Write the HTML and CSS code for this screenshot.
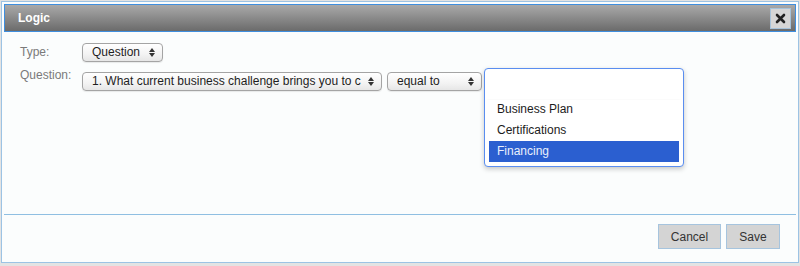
FILE: index.html
```html
<!DOCTYPE html>
<html lang="en">
<head>
    <meta charset="UTF-8">
    <title>Logic</title>
    <link rel="stylesheet" href="styles.css">
</head>
<body>
<div class="dialog">
    <div class="titlebar">
        <span class="title">Logic</span>
        <button class="close" type="button">
            <svg width="11" height="11" viewBox="0 0 11 11"><path d="M2 2 L9 9 M9 2 L2 9" stroke="#222" stroke-width="2.6" stroke-linecap="round"/></svg>
        </button>
    </div>

    <div class="content">
        <div class="row">
            <label class="lbl">Type:</label>
            <div class="select sel-type"><span class="text">Question</span><span class="arrows"></span></div>
        </div>
        <div class="row row2">
            <label class="lbl">Question:</label>
            <div class="select sel-question"><span class="text">1. What current business challenge brings you to c</span><span class="arrows"></span></div>
            <div class="select sel-op"><span class="text">equal to</span><span class="arrows"></span></div>
            <div class="value-wrap">
                <ul class="listbox">
                    <li class="blank"></li>
                    <li>Business Plan</li>
                    <li>Certifications</li>
                    <li class="selected">Financing</li>
                </ul>
            </div>
        </div>
    </div>

    <div class="footer">
        <button class="btn btn-cancel" type="button">Cancel</button>
        <button class="btn btn-save" type="button">Save</button>
    </div>
</div>
</body>
</html>
```

FILE: styles.css
```css
body {
    margin: 0;
    background-color: #e3e3e3;
    font-family: "Liberation Sans", Arial, sans-serif;
    font-size: 12px;
    height: 266px;
    overflow: hidden;
}

.dialog {
    margin: 1px 0 0 1px;
    width: 798px;
    height: 262px;
    box-sizing: border-box;
    border: 1px solid #9cc3e4;
    padding: 2px;
    background-color: #fbfdfd;
    display: flex;
    flex-direction: column;
}

.titlebar {
    height: 28px;
    box-sizing: border-box;
    border: 1px solid #3f8ede;
    background: linear-gradient(to bottom, #a9a9a9 0%, #8a8a8a 50%, #6b6b6b 100%);
    display: flex;
    align-items: center;
    justify-content: space-between;
    padding: 0 4px 0 13px;
}

.title {
    color: #fff;
    font-weight: bold;
    font-size: 12px;
}

.close {
    width: 21px;
    height: 21px;
    box-sizing: border-box;
    border: 1px solid #a6c2da;
    background-color: #d6d6d6;
    padding: 0;
    display: flex;
    align-items: center;
    justify-content: center;
}

.content {
    flex: 1;
    padding: 11px 16px 0;
}

.row {
    display: flex;
    align-items: flex-start;
    gap: 5px;
}

.row2 {
    margin-top: 5px;
}

.lbl {
    width: 57px;
    color: #7a7a7a;
    line-height: 16px;
}

.row:first-child .lbl {
    line-height: 19px;
}

.select {
    height: 19px;
    box-sizing: border-box;
    border: 1px solid #a4a4a4;
    border-radius: 4px;
    background: linear-gradient(to bottom, #ffffff 0%, #f3f3f3 60%, #e6e6e6 100%);
    box-shadow: 0 1px 1px rgba(0, 0, 0, 0.08);
    color: #1e1e1e;
    line-height: 17px;
    padding: 0 16px 0 9px;
    position: relative;
}

.select .text {
    display: block;
    white-space: nowrap;
    overflow: hidden;
}

.arrows {
    position: absolute;
    right: 7px;
    top: 4px;
    width: 6px;
    height: 9px;
}

.arrows::before,
.arrows::after {
    content: "";
    position: absolute;
    left: 0;
    border-left: 3px solid transparent;
    border-right: 3px solid transparent;
}

.arrows::before {
    top: 0;
    border-bottom: 4px solid #333;
}

.arrows::after {
    bottom: 0;
    border-top: 4px solid #333;
}

.sel-type {
    width: 81px;
}

.sel-question {
    width: 300px;
    margin-top: 5px;
}

.sel-op {
    width: 95px;
    margin-top: 5px;
}

.value-wrap {
    position: relative;
    width: 120px;
    height: 19px;
    margin-top: 5px;
}

.listbox {
    position: absolute;
    left: -3px;
    top: -4px;
    width: 200px;
    box-sizing: border-box;
    margin: 0;
    padding: 4px;
    list-style: none;
    background-color: #fff;
    border: 1px solid #5a8ef0;
    border-radius: 4px;
    box-shadow: 0 2px 5px rgba(0, 0, 0, 0.22);
    z-index: 2;
}

.listbox li {
    height: 21px;
    line-height: 21px;
    padding-left: 8px;
    color: #1c1c1c;
}

.listbox .blank {
    height: 26px;
    box-shadow: 0 2px 2px -2px rgba(0, 0, 0, 0.05);
    margin: 0 -4px;
}

.listbox .selected {
    background-color: #2b5fd0;
    color: #e9effc;
}

.footer {
    border-top: 1px solid #8fbfe2;
    padding: 9px 16px 11px 0;
    display: flex;
    justify-content: flex-end;
    gap: 5px;
}

.btn {
    height: 25px;
    box-sizing: border-box;
    border: 1px solid #a6c4de;
    background-color: #d4d4d4;
    color: #333;
    font-family: "Liberation Sans", Arial, sans-serif;
    font-size: 12px;
    padding: 0;
}

.btn-cancel {
    width: 63px;
}

.btn-save {
    width: 54px;
}
```
